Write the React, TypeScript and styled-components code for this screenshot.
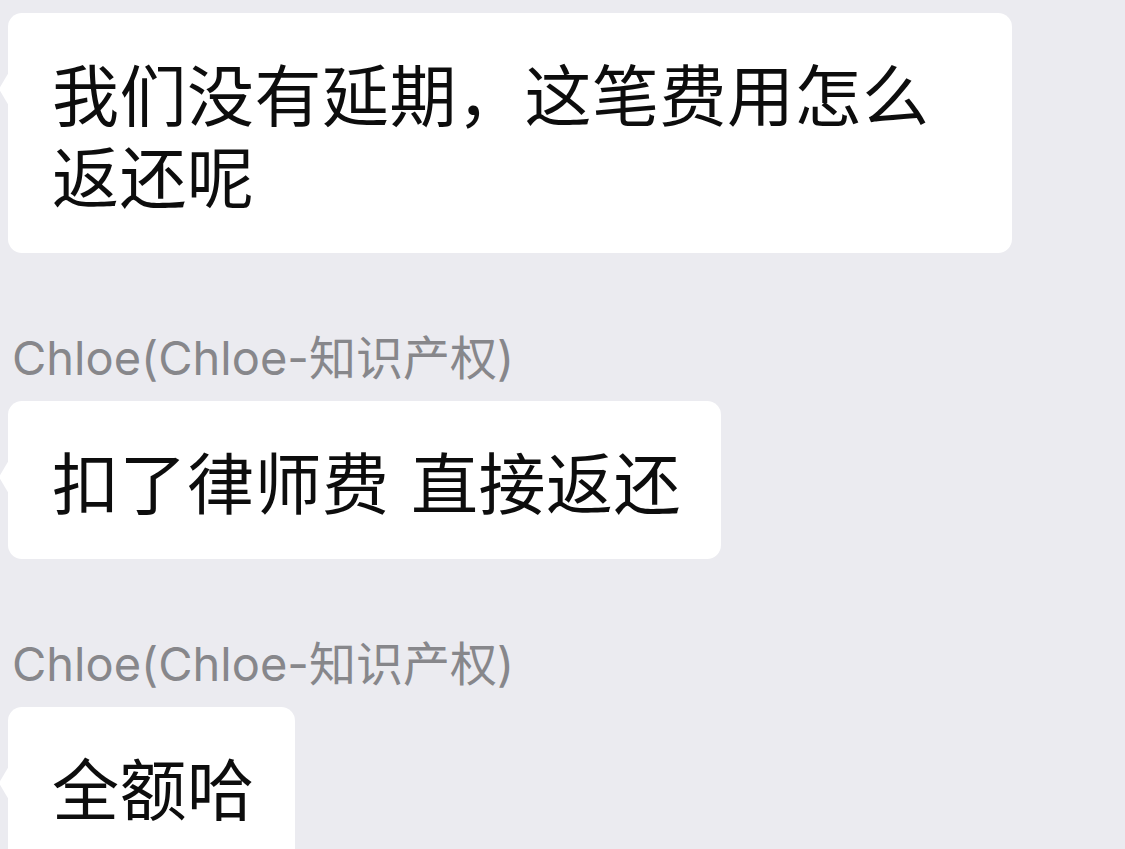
import React from 'react'
import styled, { createGlobalStyle } from 'styled-components'

const GlobalStyle = createGlobalStyle`
    html, body {
        margin: 0;
        padding: 0;
        background-color: #EBEBF0;
    }
    body {
        font-family: "Noto Sans CJK SC", "Noto Sans", sans-serif;
    }
`

type Msg = {
    name?: string
    text: string
}

const messages: Msg[] = [
    { text: '我们没有延期，这笔费用怎么返还呢' },
    { name: 'Chloe(Chloe-知识产权)', text: '扣了律师费 直接返还' },
    { name: 'Chloe(Chloe-知识产权)', text: '全额哈' },
]

const App = () => {
  return (
      <>
          <GlobalStyle />
          <Container>
              {messages.map((m, i) => (
                  <Item key={i} first={i === 0}>
                      {m.name && <Name>{m.name}</Name>}
                      <Bubble>{m.text}</Bubble>
                  </Item>
              ))}
          </Container>
      </>
  )
}

export default App

const Container = styled.div`
    width: 1125px;
    height: 849px;
    overflow: hidden;
    display: flex;
    flex-direction: column;
    align-items: flex-start;
    padding: 13px 0 0 8px;
    box-sizing: border-box;
`
const Item = styled.div<{ first?: boolean }>`
    display: flex;
    flex-direction: column;
    align-items: flex-start;
    margin-top: ${p => (p.first ? '0' : '77px')};
`
const Name = styled.div`
    font-family: "Inter", "Noto Sans CJK SC", sans-serif;
    font-size: 47px;
    line-height: 56px;
    color: #87878b;
    margin-left: 4px;
    margin-bottom: 15px;
    white-space: nowrap;
`
const Bubble = styled.div`
    position: relative;
    box-sizing: border-box;
    max-width: 1004px;
    padding: 38px 40px 38px 44px;
    background-color: #fff;
    border-radius: 14px;
    font-size: 67px;
    line-height: 82px;
    letter-spacing: 0.5px;
    word-spacing: 6px;
    color: #0d0d0d;

    &::before {
        content: '';
        position: absolute;
        left: -9px;
        top: 59px;
        width: 10px;
        height: 34px;
        background-color: #fff;
        clip-path: polygon(100% 0, 0 50%, 100% 100%);
    }
`
